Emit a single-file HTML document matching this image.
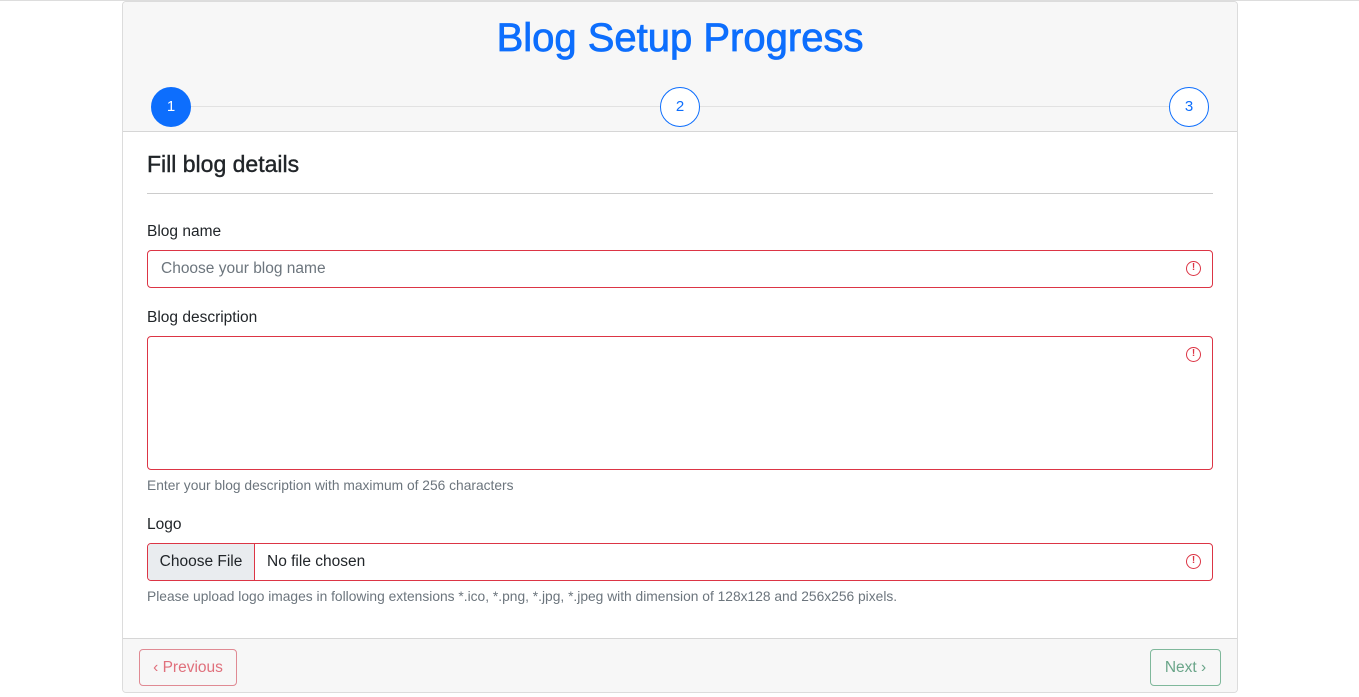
<!DOCTYPE html>
<html><head><style>
*{box-sizing:border-box;margin:0;padding:0}
body{width:1359px;height:697px;background:#fff;font-family:"Liberation Sans",sans-serif;color:#212529;position:relative;overflow:hidden}
.top{position:absolute;left:0;top:0;width:1359px;height:1px;background:#ddd}
.card{position:absolute;left:122px;top:1px;width:1116px;height:692px;border:1px solid #dcdcdc;border-radius:4px;overflow:hidden}
.hd{position:absolute;left:0;top:0;width:100%;height:130px;background:#f7f7f7;border-bottom:1px solid #d6d6d6}
h1{position:absolute;left:0;width:100%;top:14px;text-align:center;color:#0d6efd;font-size:40px;font-weight:normal;-webkit-text-stroke:0.8px #0d6efd}
.line{position:absolute;left:48px;top:104px;width:1018px;height:1px;background:#e2e2e2}
.c{position:absolute;top:85px;width:40px;height:40px;border-radius:50%;border:1px solid #0d6efd;background:#fff;color:#0d6efd;font-size:15px;text-align:center;line-height:38px}
.c.a{background:#0d6efd;color:#fff}
.t{position:absolute;left:24px}
h2{position:absolute;left:24px;top:149px;font-size:23px;font-weight:normal;-webkit-text-stroke:0.4px #212529}
.hr{position:absolute;left:24px;top:191px;width:1066px;height:1px;background:#ccc}
.lbl{font-size:15.5px}
.inp{position:absolute;left:24px;width:1066px;border:1px solid #dc3545;border-radius:4px;background:#fff}
.ph{position:absolute;left:13px;top:9px;font-size:15.5px;color:#6c757d}
.err{position:absolute;right:11px;width:15px;height:15px;border:1.5px solid #dc3545;border-radius:50%;color:#dc3545;font-size:10px;font-weight:bold;text-align:center;line-height:12px}
.help{font-size:13.8px;color:#6c757d}
.ft{position:absolute;left:0;top:636px;width:100%;height:56px;background:#f7f7f7;border-top:1px solid #d6d6d6}
.btn{position:absolute;top:10px;height:37px;border-radius:4px;font-size:15.5px;line-height:35px;text-align:center}
</style></head><body>
<div class="top"></div>
<div class="card">
<div class="hd">
<h1>Blog Setup Progress</h1>
<div class="line"></div>
<div class="c a" style="left:28px">1</div>
<div class="c" style="left:537px">2</div>
<div class="c" style="left:1046px">3</div>
</div>
<h2>Fill blog details</h2>
<div class="hr"></div>
<div class="t lbl" style="top:221px">Blog name</div>
<div class="inp" style="top:248px;height:38px"><span class="ph">Choose your blog name</span><span class="err" style="top:10px">!</span></div>
<div class="t lbl" style="top:307px">Blog description</div>
<div class="inp" style="top:334px;height:134px"><span class="err" style="top:10px">!</span></div>
<div class="t help" style="top:476px">Enter your blog description with maximum of 256 characters</div>
<div class="t lbl" style="top:514px">Logo</div>
<div class="inp" style="top:541px;height:38px;overflow:hidden"><div style="position:absolute;left:0;top:0;width:107px;height:36px;background:#e9ecef;border-right:1px solid #dc3545;font-size:15.5px;line-height:36px;text-align:center">Choose File</div><span class="ph" style="left:119px;color:#212529">No file chosen</span><span class="err" style="top:10px">!</span></div>
<div class="t help" style="top:587px">Please upload logo images in following extensions *.ico, *.png, *.jpg, *.jpeg with dimension of 128x128 and 256x256 pixels.</div>
<div class="ft">
<div class="btn" style="left:16px;width:98px;border:1px solid #e08a93;color:#e0707c">&#8249; Previous</div>
<div class="btn" style="left:1027px;width:71px;border:1px solid #7fb89b;color:#6aa589">Next &#8250;</div>
</div>
</div>
</body></html>
